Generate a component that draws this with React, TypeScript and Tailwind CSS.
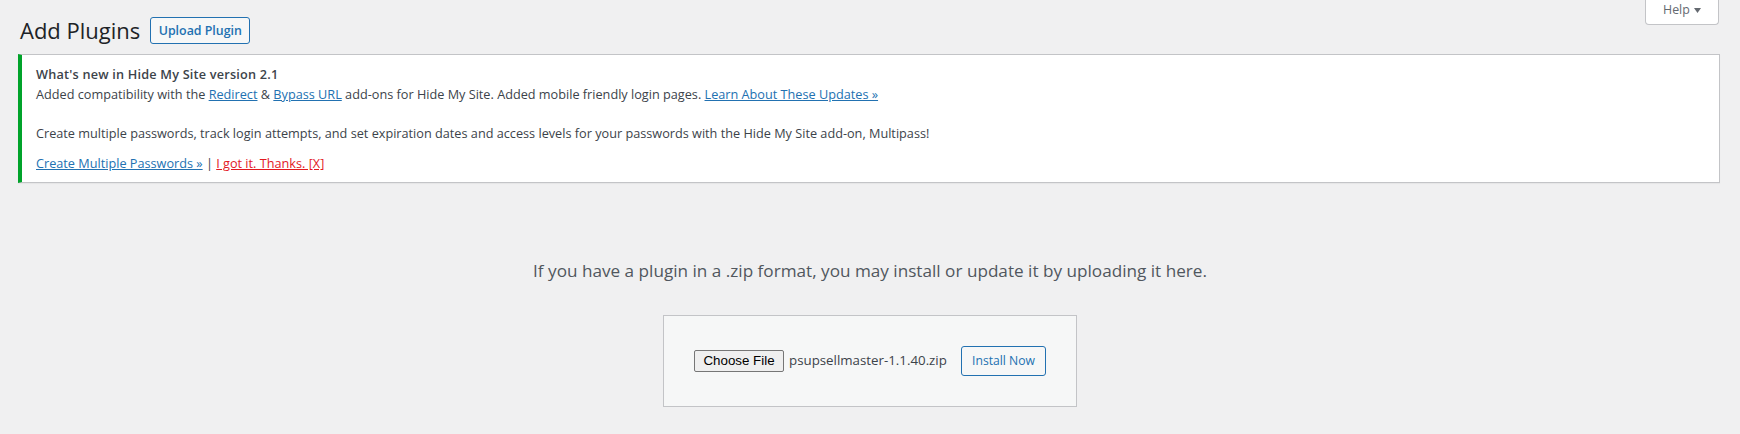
export default function App() {
  return (
    <div className="min-h-[434px] bg-[#f0f0f1] text-[12.7px] leading-[19.5px] text-[#3c434a] font-['Open_Sans',sans-serif]">
      {/* Header */}
      <div className="flex justify-between items-start pl-[20px] pr-[21px]">
        <div className="flex items-center gap-[10px] pt-[17px] h-[44px]">
          <h1 className="text-[22px] leading-[27px] font-normal text-[#1d2327]">Add Plugins</h1>
          <button className="h-[27px] w-[100px] border border-[#2271b1] rounded-[3px] bg-[#f6f7f7] text-[#2271b1] text-[12.4px] font-semibold">
            Upload Plugin
          </button>
        </div>
        <button className="h-[25px] w-[74px] bg-white border border-t-0 border-[#c3c4c7] rounded-b-[4px] flex items-start justify-between pl-[17px] pr-[17px] text-[12.4px] text-[#646970]">
          <span>Help</span>
          <svg width="7" height="5" viewBox="0 0 7 5" className="mt-[8px]">
            <path d="M0 0h7L3.5 5z" fill="#646970" />
          </svg>
        </button>
      </div>

      {/* Notice */}
      <div className="mt-[10px] ml-[18px] mr-[20px] bg-white border border-[#c3c4c7] border-l-4 border-l-[#00a32a] pt-[10px] pb-[8.5px] pl-[14px] pr-[14px] shadow-[0_1px_1px_rgba(0,0,0,0.04)]">
        <p className="font-semibold tracking-[0.2px]">What's new in Hide My Site version 2.1</p>
        <p>
          Added compatibility with the{" "}
          <a href="#" className="text-[#2271b1] underline">Redirect</a> &amp;{" "}
          <a href="#" className="text-[#2271b1] underline">Bypass URL</a> add-ons for Hide My Site. Added mobile
          friendly login pages.{" "}
          <a href="#" className="text-[#2271b1] underline">Learn About These Updates »</a>
        </p>
        <div className="h-[19.5px]" />
        <p>
          Create multiple passwords, track login attempts, and set expiration dates and access levels for your
          passwords with the Hide My Site add-on, Multipass!
        </p>
        <p className="mt-[10.5px]">
          <a href="#" className="text-[#2271b1] underline">Create Multiple Passwords »</a> |{" "}
          <a href="#" className="text-[#e3191f] underline">I got it. Thanks. [X]</a>
        </p>
      </div>

      {/* Upload */}
      <p className="mt-[75px] text-center text-[17.15px] leading-[26px] text-[#50575e]">
        If you have a plugin in a .zip format, you may install or update it by uploading it here.
      </p>
      <div className="mt-[31px] mx-auto w-[414px] h-[92px] flex items-center justify-between px-[30px] border border-[#c3c4c7] bg-[#f6f7f7]">
        <div className="flex items-center gap-[5px]">
          <span className="h-[22px] w-[90px] flex items-center justify-center bg-[#efefef] border border-[#767676] rounded-[2px] text-[13.33px] text-black font-['Liberation_Sans',Arial,sans-serif]">
            Choose File
          </span>
          <span className="text-[13.3px] text-[#3c434a]">psupsellmaster-1.1.40.zip</span>
        </div>
        <button className="h-[30px] w-[85px] border border-[#2271b1] rounded-[3px] bg-[#f6f7f7] text-[#2271b1] text-[12.15px]">
          Install Now
        </button>
      </div>
    </div>
  );
}
